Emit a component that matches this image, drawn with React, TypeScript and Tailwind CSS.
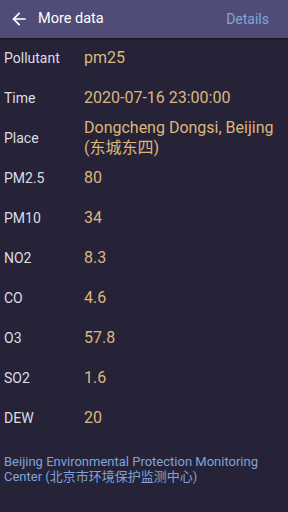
import React from "react";

const rows: { label: string; value: React.ReactNode }[] = [
  { label: "Pollutant", value: "pm25" },
  { label: "Time", value: "2020-07-16 23:00:00" },
  {
    label: "Place",
    value: (
      <>
        Dongcheng Dongsi, Beijing
        <br />
        (东城东四)
      </>
    ),
  },
  { label: "PM2.5", value: "80" },
  { label: "PM10", value: "34" },
  { label: "NO2", value: "8.3" },
  { label: "CO", value: "4.6" },
  { label: "O3", value: "57.8" },
  { label: "SO2", value: "1.6" },
  { label: "DEW", value: "20" },
];

export default function App() {
  return (
    <div
      className="w-[288px] h-[512px] bg-[#262339] overflow-hidden flex flex-col"
      style={{ fontFamily: "Roboto, 'Noto Sans CJK SC', sans-serif" }}
    >
      <div className="h-[38px] shrink-0 bg-[#504c78] flex items-center pl-[9px] pr-[19px] shadow-[0_1px_2px_rgba(0,0,0,0.5)] relative z-10">
        <svg width="20" height="20" viewBox="0 0 24 24" fill="#ffffff">
          <path d="M20 11H7.83l5.59-5.59L12 4l-8 8 8 8 1.41-1.41L7.83 13H20v-2z" />
        </svg>
        <span className="ml-[9px] text-[14.5px] text-white">More data</span>
        <span className="ml-auto text-[14px] text-[#7fa6d9]">Details</span>
      </div>
      <div className="flex flex-col">
        {rows.map((r) => (
          <div key={r.label} className="h-10 flex items-center pl-1">
            <div className="w-20 text-[14px] text-[#dedde4]">{r.label}</div>
            <div className="text-[16px] leading-5 text-[#dcb77c]">{r.value}</div>
          </div>
        ))}
      </div>
      <div className="mt-4 px-1 text-[13px] leading-[15px] text-[#7fa3d8]">
        Beijing Environmental Protection Monitoring Center (北京市环境保护监测中心)
      </div>
    </div>
  );
}
